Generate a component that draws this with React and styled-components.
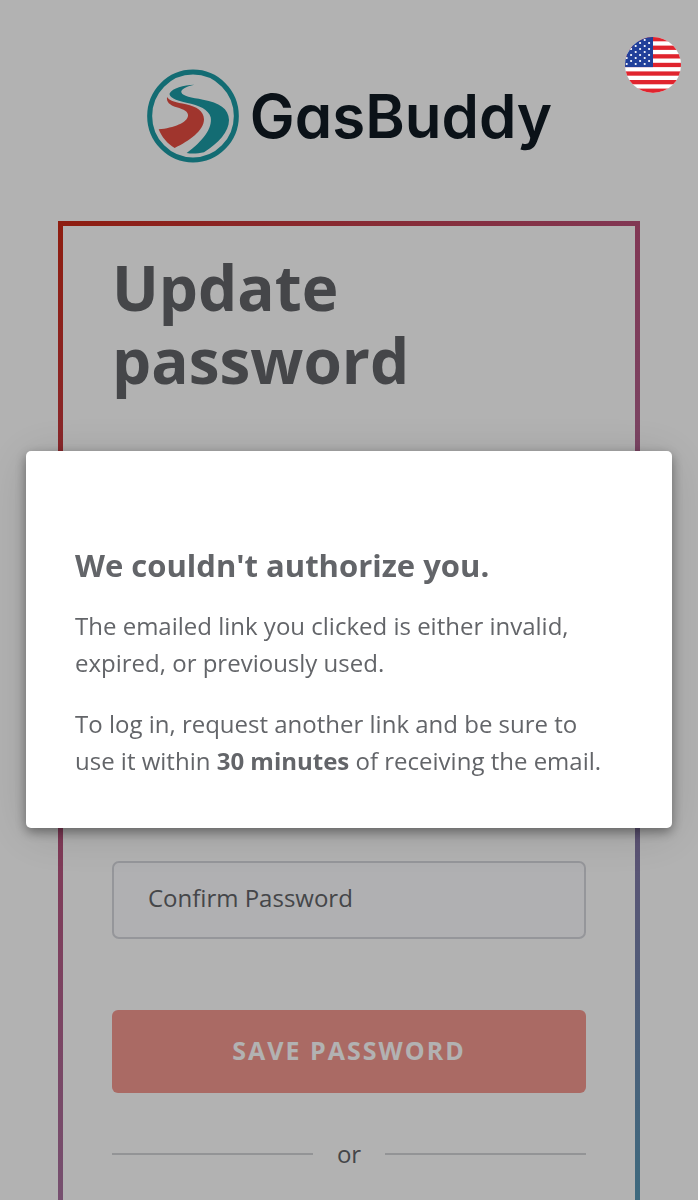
import React from 'react'
import styled, { createGlobalStyle } from 'styled-components'

const stripes = [0, 1, 2, 3, 4, 5, 6]
const starRows = [0, 1, 2, 3, 4, 5, 6, 7, 8]

function RoadMark() {
    return (
        <svg width="94" height="94" viewBox="16 25 282 282" aria-hidden="true">
            <ellipse cx="157" cy="166" rx="130" ry="132" fill="none" stroke="#1c9ba5" strokeWidth="15" />
            <path
                fill="#1c9ba5"
                d="M161 72C128 73 96 82 87 98C84 110 104 119 137 126C176 134 204 146 210 170C216 202 187 242 138 277C152 280 172 279 190 275C233 247 265 214 265 178C264 143 236 126 187 117C153 111 125 107 122 95C120 86 135 78 161 72Z"
            />
            <path
                fill="#e64d41"
                d="M79 109C77 124 86 133 108 140C130 147 143 153 142 165C140 186 100 201 54 206C63 229 80 249 102 262C146 241 190 210 190 176C189 151 168 138 136 131C107 125 88 122 79 109Z"
            />
        </svg>
    )
}

function UsFlag() {
    return (
        <svg width="56" height="56" viewBox="0 0 56 56" aria-hidden="true">
            <clipPath id="round">
                <circle cx="28" cy="28" r="28" />
            </clipPath>
            <g clipPath="url(#round)">
                <rect width="56" height="56" fill="#fff" />
                {stripes.map((row) => (
                    <rect key={row} y={row * 8.6} width="56" height="4.3" fill="#e0242e" />
                ))}
                <rect width="28" height="30.1" fill="#21409a" />
                {starRows.map((row) =>
                    [0, 1, 2].map((col) => (
                        <circle
                            key={`${row}-${col}`}
                            cx={(row % 2 ? 6.1 : 1.7) + col * 9}
                            cy={3 + row * 3}
                            r="1.1"
                            fill="#fff"
                        />
                    ))
                )}
            </g>
        </svg>
    )
}

function App() {
    return (
        <>
            <GlobalStyle />
            <Page>
                <Header>
                    <RoadMark />
                    <Wordmark>GasBuddy</Wordmark>
                </Header>
                <Card>
                    <Title>Update password</Title>
                    <Form>
                        <Input type="password" aria-label="Confirm Password" placeholder="Confirm Password" />
                        <SaveButton type="button">Save Password</SaveButton>
                    </Form>
                    <Divider>or</Divider>
                </Card>
            </Page>
            <Overlay>
                <Dialog role="dialog" aria-modal="true" aria-labelledby="dialog-title">
                    <DialogTitle id="dialog-title">We couldn't authorize you.</DialogTitle>
                    <Text>The emailed link you clicked is either invalid, expired, or previously used.</Text>
                    <Text>
                        To log in, request another link and be sure to use it within <b>30 minutes</b> of
                        receiving the email.
                    </Text>
                </Dialog>
            </Overlay>
            <LanguageButton type="button" aria-label="United States">
                <UsFlag />
            </LanguageButton>
        </>
    )
}

const GlobalStyle = createGlobalStyle`
  * {
    box-sizing: border-box;
  }
  body {
    margin: 0;
    overflow: hidden;
    background: #fff;
    color: #636569;
    font-family: 'Open Sans', 'Noto Sans', sans-serif;
    font-size: 24px;
  }
`;
const Page = styled.div`
  height: 100vh;
  overflow: hidden;
  padding: 0 58px;
`;
const Header = styled.header`
  display: flex;
  align-items: center;
  justify-content: center;
  gap: 10px;
  padding: 69px 0 58px;
`;
const Wordmark = styled.span`
  color: #101a23;
  font-family: Inter, 'Open Sans', sans-serif;
  font-feature-settings: 'cv11';
  font-size: 60px;
  font-weight: 600;
  line-height: 80px;
`;
const Card = styled.main`
  padding: 25px 49px 160px;
  border: 5px solid;
  border-image: linear-gradient(135deg, #cc2a18 0, #b9507a 417px, #a9729f 693px, #8676a6 839px, #5a97b5 1100px) 1;
`;
const Title = styled.h1`
  margin: 0;
  font-size: 62px;
  font-weight: 700;
  line-height: 73px;
`;
const Form = styled.form`
  display: flex;
  flex-direction: column;
  gap: 71px;
  margin-top: 464px;
`;
const Input = styled.input`
  width: 100%;
  height: 78px;
  padding: 0 34px 6px;
  border: 2px solid #d6d7dd;
  border-radius: 7px;
  background: #fdfdff;
  color: #636569;
  font: inherit;

  &::placeholder {
    color: #636569;
    opacity: 1;
  }
`;
const SaveButton = styled.button`
  width: 100%;
  height: 83px;
  padding: 0 0 4px;
  border: 0;
  border-radius: 6px;
  background: #f49890;
  color: #fff;
  font: inherit;
  font-size: 25px;
  font-weight: 700;
  letter-spacing: 2px;
  text-transform: uppercase;
`;
const Divider = styled.div`
  display: flex;
  align-items: center;
  gap: 24px;
  margin-top: 43px;
  line-height: 36px;

  &::before,
  &::after {
    content: '';
    flex: 1;
    height: 2px;
    background: #d3d4d7;
  }
`;
const Overlay = styled.div`
  position: fixed;
  inset: 0;
  display: flex;
  align-items: center;
  justify-content: center;
  padding: 79px 26px 0;
  background: rgba(0, 0, 0, 0.3);
`;
const Dialog = styled.section`
  width: 100%;
  padding: 96px 49px 49px;
  border-radius: 5px;
  background: #fff;
  box-shadow: 0 4px 12px rgba(0, 0, 0, 0.4), 0 6px 48px rgba(0, 0, 0, 0.15);
`;
const DialogTitle = styled.h2`
  margin: 0;
  font-size: 31px;
  font-weight: 700;
  line-height: 36px;
`;
const Text = styled.p`
  margin: 24px 0 0;
  line-height: 37px;
`;
const LanguageButton = styled.button`
  position: fixed;
  top: 37px;
  right: 17px;
  display: flex;
  padding: 0;
  border: 0;
  border-radius: 50%;
  background: none;
`;
export default App
